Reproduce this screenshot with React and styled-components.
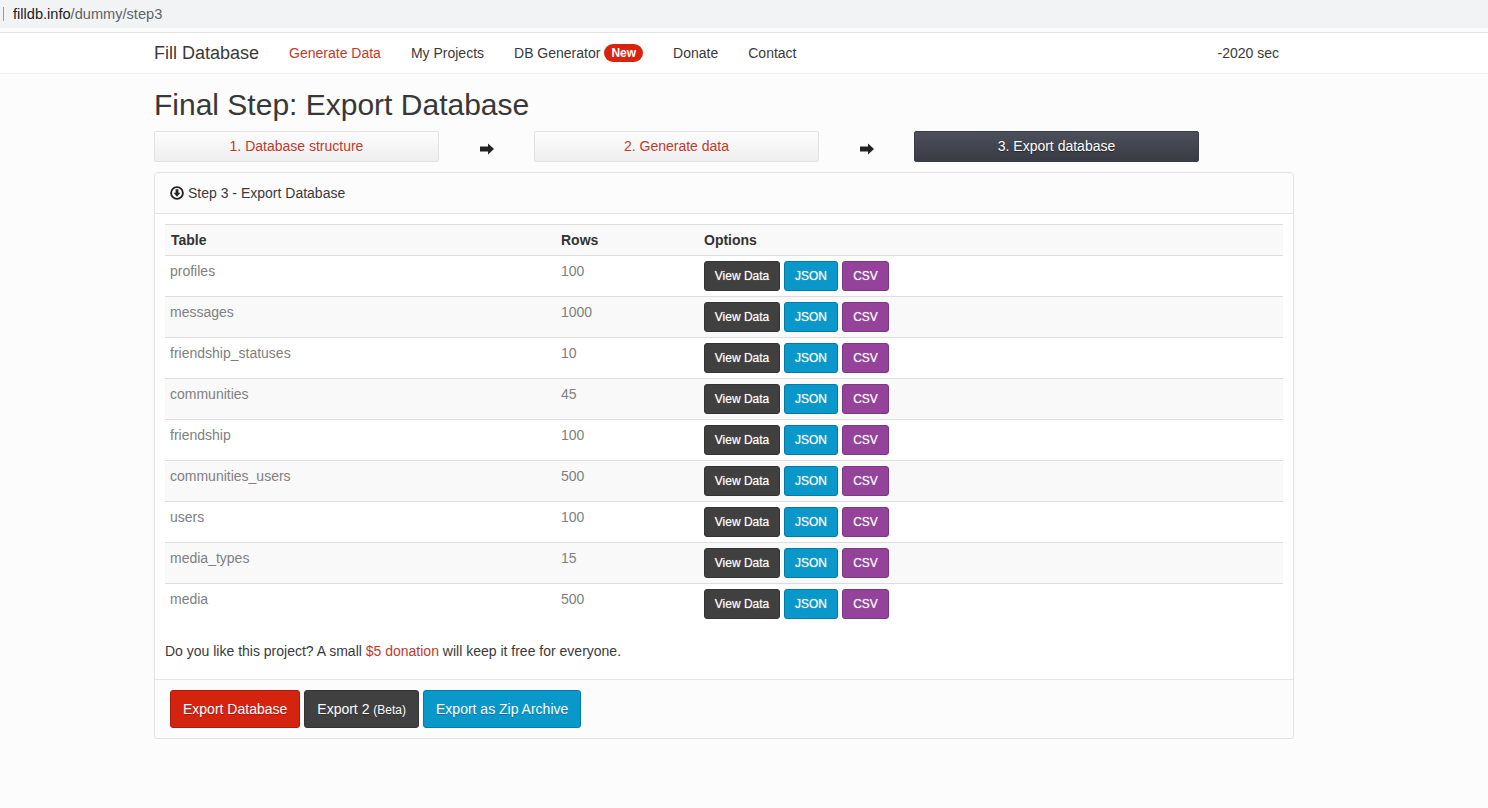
import React from "react";
import styled, { createGlobalStyle } from "styled-components";

const tables = [
	["profiles", 100],
	["messages", 1000],
	["friendship_statuses", 10],
	["communities", 45],
	["friendship", 100],
	["communities_users", 500],
	["users", 100],
	["media_types", 15],
	["media", 500]
];

const GlobalStyle = createGlobalStyle`
	html, body {
		margin: 0;
		padding: 0;
		background: #fcfcfc;
		font-family: "Liberation Sans", Arial, sans-serif;
		font-size: 14px;
		line-height: 20px;
		color: #3a3a3a;
	}
`;

const AddressBar = styled.div`
	height: 28px;
	background: #f1f3f4;
	display: flex;
	align-items: center;
	font-size: 14.6px;
	color: #5f6368;
`;
const Caret = styled.span`
	width: 1px;
	height: 14px;
	margin: 0 9px 0 3px;
	background: #9a9a9a;
`;
const Host = styled.span`
	color: #202124;
`;

const Navbar = styled.nav`
	height: 40px;
	margin-top: 4px;
	background: #fff;
	border-top: 1px solid #e2e2e2;
	border-bottom: 1px solid #eee;
`;
const NavInner = styled.div`
	width: 1140px;
	height: 100%;
	margin-left: 154px;
	display: flex;
	align-items: center;
`;
const Brand = styled.span`
	font-size: 18px;
	color: #3a3a3a;
	margin-right: 30px;
`;
const NavLink = styled.a`
	font-size: 14px;
	margin-right: 30px;
	color: ${(p) => (p.$active ? "#bf3a2e" : "#3a3a3a")};
	display: flex;
	align-items: center;
`;
const Badge = styled.span`
	margin-left: 4px;
	padding: 0 7px;
	height: 18px;
	line-height: 18px;
	border-radius: 9px;
	background: #d9230f;
	color: #fff;
	font-size: 12px;
	font-weight: bold;
`;
const Timer = styled.span`
	margin-left: auto;
	margin-right: 15px;
	font-size: 14px;
`;

const Page = styled.main`
	width: 1140px;
	margin-left: 154px;
`;
const Title = styled.h1`
	margin: 14px 0 10px;
	font-size: 30px;
	line-height: 33px;
	font-weight: 400;
	color: #383838;
`;
const Steps = styled.div`
	display: grid;
	grid-template-columns: 285px 95px 285px 95px 285px;
	margin-bottom: 10px;
`;
const Step = styled.div`
	height: 31px;
	box-sizing: border-box;
	line-height: 28px;
	text-align: center;
	border-radius: 2px;
	border: 1px solid ${(p) => (p.$current ? "#3a3d46" : "#e2e2e2")};
	background: ${(p) =>
		p.$current
			? "linear-gradient(#4d505b, #383b44)"
			: "linear-gradient(#fcfcfc, #efefef)"};
	color: ${(p) => (p.$current ? "#fff" : "#bf3a2e")};
	text-shadow: ${(p) => (p.$current ? "0 1px 1px rgba(0,0,0,.5)" : "none")};
`;
const ArrowCell = styled.div`
	display: flex;
	justify-content: center;
	align-items: center;
	padding-top: 5px;
`;

const Panel = styled.section`
	box-sizing: border-box;
	height: 567px;
	border: 1px solid #e2e2e2;
	border-radius: 4px;
	background: #fff;
	box-shadow: 0 1px 1px rgba(0, 0, 0, 0.06);
	display: flex;
	flex-direction: column;
	overflow: hidden;
`;
const PanelHead = styled.header`
	height: 40px;
	flex: none;
	background: #fcfcfc;
	border-bottom: 1px solid #e4e4e4;
	display: flex;
	align-items: center;
	padding-left: 15px;
	gap: 4px;
`;
const PanelBody = styled.div`
	flex: 1;
	padding: 10px 10px 0;
`;
const Table = styled.table`
	width: 100%;
	border-collapse: collapse;
	table-layout: fixed;
	border-top: 1px solid #ddd;
`;
const HeadCell = styled.th`
	height: 31px;
	box-sizing: border-box;
	padding: 0 5px;
	text-align: left;
	font-size: 14px;
	color: #333;
	background: #f9f9f9;
	border-bottom: 1px solid #ddd;
	width: ${(p) => p.$width || "auto"};
	&:first-child {
		padding-left: 6px;
	}
`;
const Row = styled.tr`
	background: ${(p) => (p.$odd ? "#f9f9f9" : "#fff")};
	border-bottom: 1px solid #ddd;
	&:last-child {
		border-bottom: 0;
	}
`;
const Cell = styled.td`
	padding: 5px;
	vertical-align: top;
	color: #808080;
`;
const Actions = styled.div`
	display: flex;
	gap: 4px;
`;

const tones = {
	dark: ["#404040", "#333"],
	blue: ["#0a98ca", "#027ba6"],
	purple: ["#94429a", "#7c397f"],
	red: ["#d4230f", "#a91b0c"]
};
const Btn = styled.a`
	box-sizing: border-box;
	display: block;
	border-radius: 3px;
	color: #fff;
	text-align: center;
	background: ${(p) => tones[p.$tone][0]};
	border: 1px solid ${(p) => tones[p.$tone][1]};
	text-shadow: 0 1px 0 rgba(0, 0, 0, 0.25);
`;
const SmallBtn = styled(Btn)`
	width: ${(p) => p.$width}px;
	height: 30px;
	line-height: 28px;
	font-size: 12px;
	text-shadow: 0 0 1px rgba(255, 255, 255, 0.55);
`;
const BigBtn = styled(Btn)`
	height: 38px;
	line-height: 36px;
	padding: 0 12px;
	font-size: 14px;
`;
const Beta = styled.small`
	font-size: 12px;
`;
const Note = styled.p`
	margin: 17px 0 0;
	color: #3a3a3a;
`;
const Red = styled.a`
	color: #bf3a2e;
`;
const PanelFoot = styled.footer`
	height: 59px;
	flex: none;
	box-sizing: border-box;
	background: #fcfcfc;
	border-top: 1px solid #e4e4e4;
	display: flex;
	gap: 4px;
	padding: 10px 15px;
`;

const ArrowIcon = () => (
	<svg width="14" height="12" viewBox="0 0 14 12">
		<path d="M0 3.5h8V.5L14 6l-6 5.5v-3H0z" fill="#222" />
	</svg>
);

const DownloadIcon = () => (
	<svg width="14" height="14" viewBox="0 0 14 14">
		<circle cx="7" cy="7" r="5.9" fill="none" stroke="#222" strokeWidth="1.9" />
		<path d="M5.6 3.2h2.8v3.6h2L7 10.8 3.6 6.8h2z" fill="#222" />
	</svg>
);

const App = () => (
	<>
		<GlobalStyle />
		<AddressBar>
			<Caret />
			<Host>filldb.info</Host>/dummy/step3
		</AddressBar>
		<Navbar>
			<NavInner>
				<Brand>Fill Database</Brand>
				<NavLink $active>Generate Data</NavLink>
				<NavLink>My Projects</NavLink>
				<NavLink>
					DB Generator <Badge>New</Badge>
				</NavLink>
				<NavLink>Donate</NavLink>
				<NavLink>Contact</NavLink>
				<Timer>-2020 sec</Timer>
			</NavInner>
		</Navbar>
		<Page>
			<Title>Final Step: Export Database</Title>
			<Steps>
				<Step>1. Database structure</Step>
				<ArrowCell>
					<ArrowIcon />
				</ArrowCell>
				<Step>2. Generate data</Step>
				<ArrowCell>
					<ArrowIcon />
				</ArrowCell>
				<Step $current>3. Export database</Step>
			</Steps>
			<Panel>
				<PanelHead>
					<DownloadIcon />
					Step 3 - Export Database
				</PanelHead>
				<PanelBody>
					<Table>
						<thead>
							<tr>
								<HeadCell $width="391px">Table</HeadCell>
								<HeadCell $width="143px">Rows</HeadCell>
								<HeadCell>Options</HeadCell>
							</tr>
						</thead>
						<tbody>
							{tables.map(([name, rows], i) => (
								<Row key={name} $odd={i % 2 === 1}>
									<Cell>{name}</Cell>
									<Cell>{rows}</Cell>
									<Cell>
										<Actions>
											<SmallBtn $tone="dark" $width={76}>View Data</SmallBtn>
											<SmallBtn $tone="blue" $width={54}>JSON</SmallBtn>
											<SmallBtn $tone="purple" $width={47}>CSV</SmallBtn>
										</Actions>
									</Cell>
								</Row>
							))}
						</tbody>
					</Table>
					<Note>
						Do you like this project? A small <Red>$5 donation</Red> will keep it
						free for everyone.
					</Note>
				</PanelBody>
				<PanelFoot>
					<BigBtn $tone="red">Export Database</BigBtn>
					<BigBtn $tone="dark">
						Export 2 <Beta>(Beta)</Beta>
					</BigBtn>
					<BigBtn $tone="blue">Export as Zip Archive</BigBtn>
				</PanelFoot>
			</Panel>
		</Page>
	</>
);

export default App;
